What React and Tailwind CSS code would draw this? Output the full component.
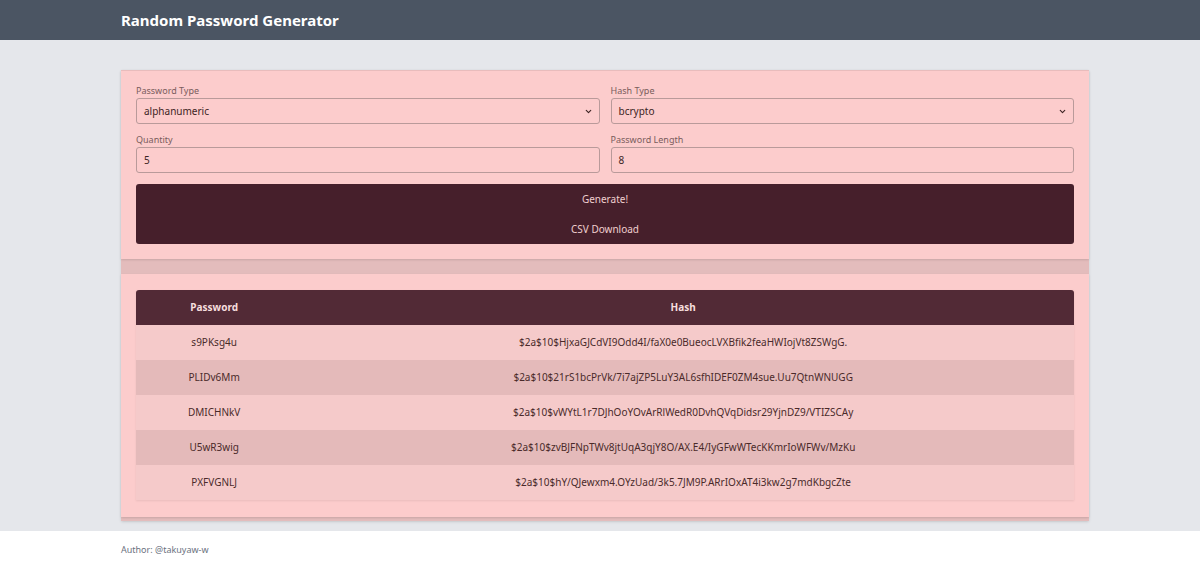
import { ChevronDown } from "lucide-react";

const rows = [
  ["s9PKsg4u", "$2a$10$HjxaGJCdVI9Odd4I/faX0e0BueocLVXBfik2feaHWIojVt8ZSWgG."],
  ["PLIDv6Mm", "$2a$10$21rS1bcPrVk/7i7ajZP5LuY3AL6sfhIDEF0ZM4sue.Uu7QtnWNUGG"],
  ["DMICHNkV", "$2a$10$vWYtL1r7DJhOoYOvArRlWedR0DvhQVqDidsr29YjnDZ9/VTIZSCAy"],
  ["U5wR3wig", "$2a$10$zvBJFNpTWv8jtUqA3qjY8O/AX.E4/IyGFwWTecKKmrIoWFWv/MzKu"],
  ["PXFVGNLJ", "$2a$10$hY/QJewxm4.OYzUad/3k5.7JM9P.ARrIOxAT4i3kw2g7mdKbgcZte"],
];

const Field = ({ label, value, select }) => (
  <div className="flex flex-col">
    <label className="text-[9px] leading-[12px] text-[#7a5c5c] mb-[1px]">{label}</label>
    <div className="h-[26px] rounded-[3px] border border-[#b99a9a] bg-[#fccccc] flex items-center justify-between pl-[7px] pr-[6px] text-[10px] text-[#3d2424]">
      <span>{value}</span>
      {select && <ChevronDown className="w-[9px] h-[9px] text-[#3d2424]" strokeWidth={3} />}
    </div>
  </div>
);

const App = () => {
  return (
    <div className="min-h-screen flex flex-col bg-white" style={{ fontFamily: '"Noto Sans", "Open Sans", sans-serif' }}>
      <header className="h-[40px] bg-[#4b5563] flex items-center pl-[121px]">
        <h1 className="text-[15px] font-bold text-white">Random Password Generator</h1>
      </header>

      <main className="bg-[#e5e7eb] h-[491px] pt-[30px] pl-[121px] pr-[111px]">
        <div className="bg-[#e3bcbc] pb-[4px] shadow-sm">
          {/* form card */}
          <div className="bg-[#fccccc] border-t border-[#e8bcbc] px-[15px] pt-[14px] pb-[15px] shadow-[0_1px_2px_rgba(0,0,0,0.12)] mb-[15px]">
            <div className="grid grid-cols-2 gap-x-[11px] gap-y-[10px]">
              <Field label="Password Type" value="alphanumeric" select />
              <Field label="Hash Type" value="bcrypto" select />
              <Field label="Quantity" value="5" />
              <Field label="Password Length" value="8" />
            </div>
            <div className="mt-[11px]">
              <button className="w-full h-[30px] bg-[#461f2b] rounded-t-[3px] text-[10px] text-[#f0cfcf] block">Generate!</button>
              <button className="w-full h-[30px] bg-[#461f2b] rounded-b-[3px] text-[10px] text-[#f0cfcf] block">CSV Download</button>
            </div>
          </div>

          {/* result card */}
          <div className="bg-[#fccccc] px-[15px] pt-[16px] pb-[17px] shadow-[0_1px_2px_rgba(0,0,0,0.12)]">
            <table className="w-full border-collapse text-[10px] shadow-[0_1px_2px_rgba(0,0,0,0.08)]">
              <thead>
                <tr className="bg-[#522a36] text-[#f6dede] h-[35px]">
                  <th className="w-1/6 font-bold rounded-tl-[3px]">Password</th>
                  <th className="font-bold rounded-tr-[3px]">Hash</th>
                </tr>
              </thead>
              <tbody className="text-[#4a2a2a]">
                {rows.map(([pw, hash], i) => (
                  <tr key={pw} className={`h-[35px] ${i % 2 === 0 ? "bg-[#f5caca]" : "bg-[#e4baba]"}`}>
                    <td className="text-center">{pw}</td>
                    <td className="text-center">{hash}</td>
                  </tr>
                ))}
              </tbody>
            </table>
          </div>
        </div>
      </main>

      <footer className="pl-[121px] pt-[12px] pb-[12px]">
        <p className="text-[9px] text-[#6b7280]">Author: @takuyaw-w</p>
      </footer>
    </div>
  );
};

export default App;
